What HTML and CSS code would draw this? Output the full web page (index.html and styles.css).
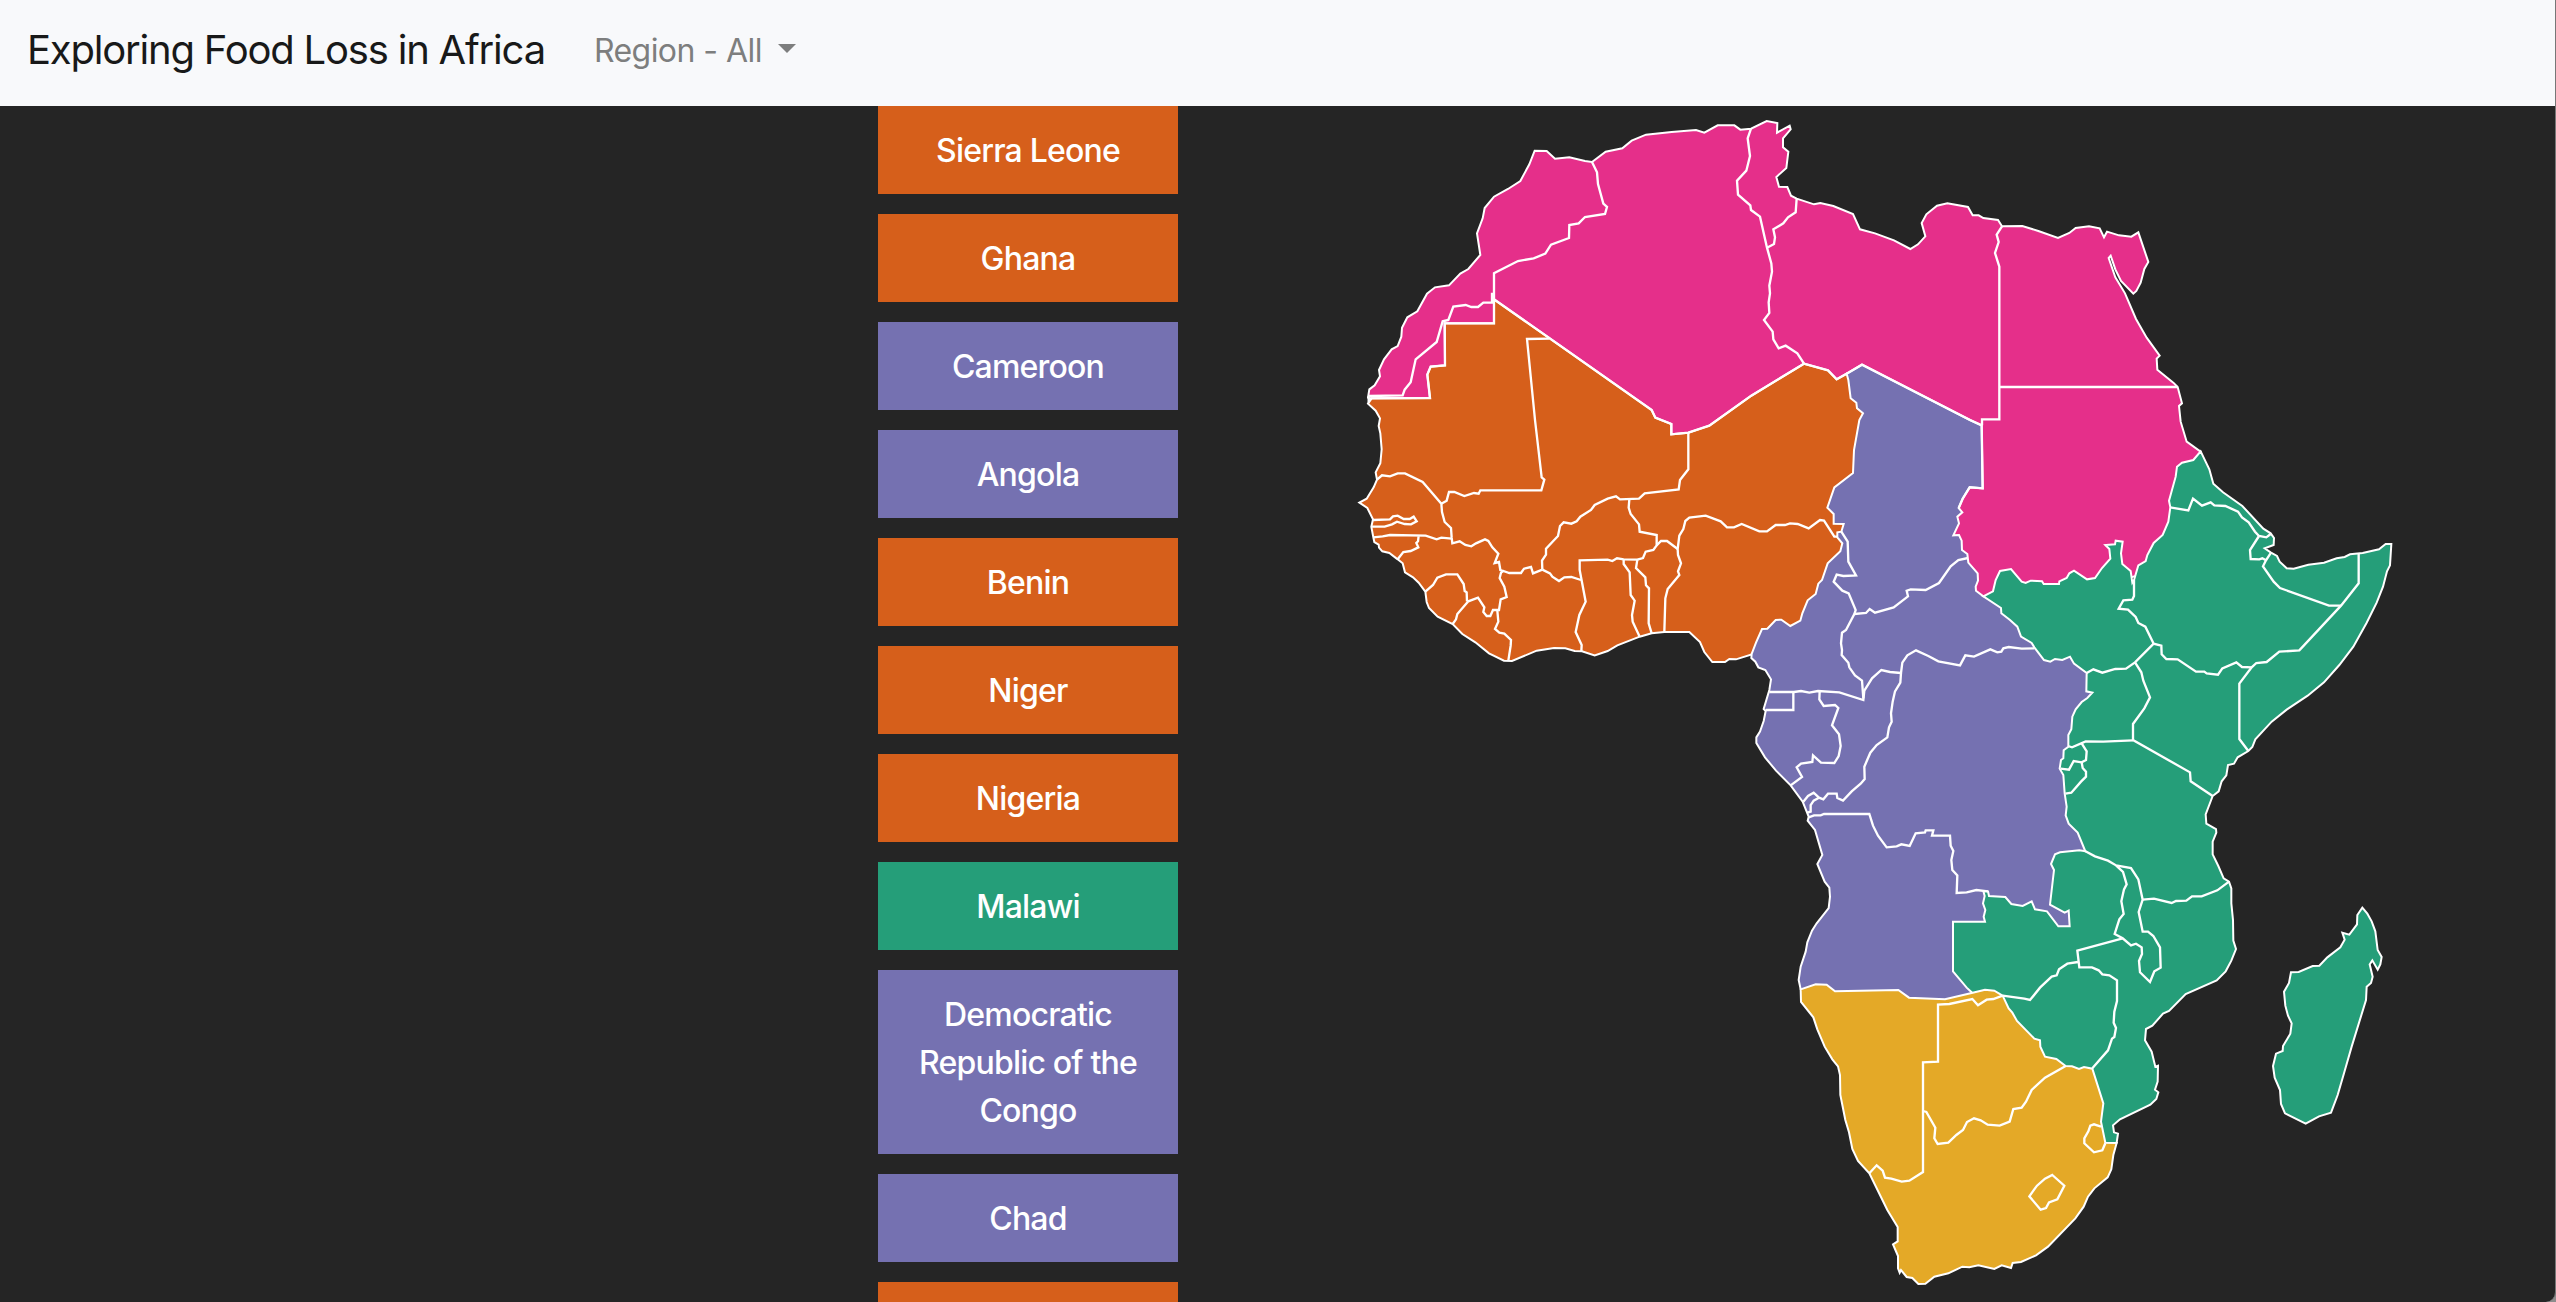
FILE: index.html
```html
<!DOCTYPE html>
<html lang="en">
<head>
<meta charset="utf-8">
<title>Exploring Food Loss in Africa</title>
<link rel="stylesheet" href="styles.css">
</head>
<body>
<nav class="navbar">
  <a class="brand">Exploring Food Loss in Africa</a>
  <a class="dropdown">Region - All<span class="caret"></span></a>
</nav>
<main class="content">
  <div class="countries">
    <div class="card west">Sierra Leone</div>
    <div class="card west">Ghana</div>
    <div class="card central">Cameroon</div>
    <div class="card central">Angola</div>
    <div class="card west">Benin</div>
    <div class="card west">Niger</div>
    <div class="card west">Nigeria</div>
    <div class="card east">Malawi</div>
    <div class="card central">Democratic Republic of the Congo</div>
    <div class="card central">Chad</div>
    <div class="card west"></div>
  </div>
  <svg class="map" viewBox="0 18 3300 3588" role="img" aria-label="Map of Africa by region">
    <!-- Northern Africa -->
    <path class="region north" d="M84,893L88,868 104,856 120,829 117,810 132,778 155,748 173,738 184,710 186,683 202,652 232,634 261,581 285,562 327,556 361,521 385,507 421,465 411,400 428,355 434,324 462,290 504,267 541,243 568,193 584,152 620,153 645,176 688,172 735,183 756,186 797,155 847,145 875,122 918,104 995,96 1068,90 1093,98 1133,76 1183,76 1201,89 1233,86 1280,63 1312,69 1311,98 1349,77 1352,88 1329,115 1329,142 1345,155 1339,204 1309,231 1317,260 1342,261 1353,287 1370,296 1422,313 1441,309 1480,318 1539,342 1560,388 1605,400 1662,421 1711,447 1734,433 1756,409 1745,369 1759,343 1791,317 1822,310 1884,321 1898,346 1916,346 1930,354 1974,360 1986,379 2047,378 2095,393 2154,414 2188,399 2207,384 2247,379 2279,385 2292,412 2301,395 2337,406 2374,410 2395,397 2425,486 2413,507 2402,548 2389,573 2380,581 2343,543 2326,508 2312,467 2306,474 2326,532 2355,580 2388,657 2420,713 2459,767 2450,776 2452,809 2500,848 2513,861 2526,910 2517,918 2522,965 2540,1025 2582,1055 2500,1400 2100,1500 1936,1492 1885,1480 1700,1100 1400,1000 1000,1020 500,900 200,920 110,905Z"/>
    <!-- Western Africa -->
    <path class="region west" d="M84,911L95,895 270,894 262,824 272,800 315,796 314,670 462,670 462,598 625,712 935,930 946,953 994,972 994,1003 1045,998 1108,977 1234,887 1392,791 1464,811 1490,838 1520,821 1620,950 1600,1200 1580,1400 1500,1600 1350,1700 1234,1664 1188,1678 1168,1677 1155,1686 1117,1686 1093,1656 1080,1626 1048,1596 973,1596 935,1600 899,1610 832,1636 803,1653 764,1666 726,1654 704,1653 676,1645 642,1644 590,1652 516,1683 492,1682 447,1660 406,1627 367,1602 338,1572 293,1550 267,1524 260,1506 256,1475 236,1448 219,1432 195,1417 188,1390 173,1378 148,1359 127,1354 117,1343 116,1334 103,1326 100,1312 94,1280 99,1258 82,1224 58,1208 80,1196 101,1162 111,1139 107,1117 121,1090 125,1048 121,1000 116,978 120,955 107,932Z"/>
    <!-- Central Africa -->
    <path class="region central" d="M1520,821L1566,794 1890,960 1925,976 1928,1165 1889,1162 1868,1196 1856,1224 1867,1237 1852,1250 1857,1270 1840,1306 1857,1305 1865,1322 1866,1350 1882,1362 1885,1388 1913,1420 1914,1442 1907,1460 1908,1472 1930,1489 2000,1500 2150,1640 2200,1640 2260,1700 2290,1850 2220,1980 2260,2180 2240,2420 2230,2500 2040,2520 1920,2570 1940,2680 1840,2730 1440,2730 1382,2668 1376,2640 1382,2600 1397,2555 1402,2527 1416,2492 1430,2470 1466,2424 1470,2390 1468,2363 1454,2345 1432,2292 1447,2265 1425,2190 1403,2162 1406,2150 1388,2105 1352,2056 1308,2012 1275,1972 1249,1929 1249,1912 1260,1895 1271,1863 1277,1833 1271,1827 1288,1770 1293,1738 1276,1710 1255,1702 1246,1685 1234,1674 1235,1662 1248,1628 1266,1587 1282,1586 1307,1560 1324,1559 1351,1578 1381,1562 1387,1540 1403,1501 1427,1482 1435,1451 1446,1440 1463,1390 1501,1354 1507,1330 1492,1312 1492,1297 1504,1295 1511,1272 1481,1271 1481,1242 1462,1223 1483,1162 1539,1119 1542,1050 1558,960 1569,940 1551,925 1549,908 1532,895 1525,840Z"/>
    <!-- Eastern Africa -->
    <path class="region east" d="M2582,1054L2608,1108 2620,1151 2649,1177 2707,1218 2770,1286 2792,1300 2802,1314 2801,1335 2774,1345 2793,1358 2811,1368 2819,1385 2840,1405 2861,1406 2905,1394 2952,1388 2990,1375 3014,1371 3030,1363 3068,1359 3117,1348 3137,1332 3154,1332 3150,1396 3141,1414 3129,1460 3110,1508 3080,1568 3040,1640 2998,1695 2952,1747 2903,1787 2840,1829 2795,1865 2746,1918 2737,1941 2725,1953 2693,1972 2682,1991 2664,1995 2659,2026 2645,2044 2636,2074 2618,2088 2597,2143 2599,2171 2628,2187 2629,2198 2618,2225 2618,2263 2635,2298 2651,2335 2667,2345 2674,2365 2674,2410 2679,2460 2680,2522 2688,2547 2674,2582 2657,2614 2630,2641 2537,2682 2487,2733 2469,2741 2437,2777 2418,2787 2415,2821 2435,2855 2446,2900 2454,2897 2453,2945 2445,2969 2455,2977 2449,2997 2431,3014 2340,3058 2319,3076 2322,3097 2334,3101 2330,3128 2200,3150 2200,2980 2060,2900 1970,2780 1920,2705 1894,2676 1880,2663 1839,2614 1839,2465 1935,2465 1931,2450 1936,2430 1929,2410 1934,2388 1930,2373 1944,2374 1947,2388 1996,2391 2014,2412 2048,2418 2075,2404 2085,2428 2121,2434 2155,2479 2189,2479 2186,2432 2174,2438 2130,2414 2142,2310 2133,2292 2145,2263 2160,2257 2218,2251 2236,2254 2213,2198 2186,2171 2177,2146 2180,2120 2174,2080 2170,2025 2159,2006 2163,1980 2170,1975 2171,1951 2185,1940 2185,1905 2194,1888 2197,1850 2207,1828 2225,1806 2242,1794 2257,1778 2239,1774 2240,1719 2202,1691 2190,1670 2167,1680 2145,1677 2131,1685 2112,1680 2083,1642 2075,1629 2043,1610 2032,1580 2010,1560 1984,1540 1983,1524 1930,1489 1959,1474 1967,1440 1980,1413 2013,1407 2045,1445 2057,1449 2072,1442 2106,1444 2111,1452 2157,1452 2158,1444 2180,1434 2188,1420 2202,1412 2241,1438 2265,1434 2286,1404 2311,1376 2308,1347 2296,1335 2325,1333 2327,1322 2348,1325 2343,1360 2347,1392 2372,1413 2377,1448 2382,1440 2395,1396 2417,1383 2422,1365 2441,1329 2468,1305 2485,1265 2491,1222 2487,1202 2507,1130 2511,1100 2526,1088 2560,1080Z"/>
    <!-- Madagascar -->
    <path class="region east" d="M3067,2423L3082,2441 3095,2464 3106,2494 3113,2550 3125,2571 3121,2593 3113,2609 3097,2581 3089,2593 3098,2630 3093,2649 3080,2660 3078,2700 3035,2840 3012,2920 2993,2985 2973,3038 2937,3049 2897,3071 2835,3040 2823,3012 2820,2970 2804,2933 2799,2898 2808,2861 2828,2853 2829,2838 2851,2801 2855,2770 2844,2747 2836,2717 2832,2675 2847,2649 2853,2617 2876,2616 2918,2598 2938,2597 2962,2572 3001,2542 3014,2519 3007,2498 3028,2504 3051,2473 3052,2445Z"/>
    <!-- Southern Africa -->
    <path class="region south" d="M1382,2668L1427,2653 1460,2654 1485,2674 1675,2670 1707,2693 1815,2698 1895,2679 1935,2669 1963,2672 1988,2687 2006,2725 2017,2738 2031,2763 2083,2816 2100,2821 2101,2840 2115,2870 2149,2877 2177,2898 2196,2899 2217,2907 2232,2901 2257,2906 2290,3010 2283,3065 2296,3128 2330,3129 2320,3165 2314,3208 2303,3232 2263,3265 2244,3290 2231,3320 2206,3355 2124,3440 2088,3466 2043,3486 2018,3489 2013,3504 1985,3496 1963,3507 1915,3496 1888,3502 1867,3500 1825,3520 1783,3530 1756,3551 1735,3552 1717,3534 1700,3531 1683,3510 1679,3518 1674,3505 1674,3468 1659,3433 1673,3424 1673,3381 1642,3330 1588,3220 1554,3183 1537,3147 1527,3097 1516,3060 1501,2985 1500,2925 1494,2899 1477,2878 1454,2840 1432,2788 1420,2752 1383,2706Z"/>

    <!-- borders between regions -->
    <g class="border">
      <path d="M84,895L270,894 262,824 272,800 315,796 314,670 462,670 462,598 625,712 935,930 946,953 994,972 994,1003 1045,998 1108,977 1234,887 1392,791 1464,811 1490,838 1520,821 1566,794 1890,960 1925,976 1928,1165 1889,1162 1868,1196 1856,1224"/>
    </g>
    <!-- northern borders -->
    <g class="border">
      <path d="M756,186L771,217 774,252 790,311 801,321 795,342 735,351 716,370 688,375 687,414 633,434 616,461 581,475 534,483 462,520 462,600"/>
      <path d="M456,578V608H430L414,621 394,621 377,615 340,620 325,660 308,664 290,726 227,778 212,847 194,869 188,886 86,888M86,888V908"/>
      <path d="M1233,86L1223,115 1230,168 1219,212 1191,242 1194,284 1231,316 1233,330 1260,350 1281,443 1294,490 1296,515 1288,557 1290,580 1286,607 1288,639 1272,660 1298,695 1300,718 1316,745 1337,737 1372,760 1392,791"/>
      <path d="M1281,443L1302,432 1305,412 1300,388 1330,370 1344,352 1367,337 1370,296"/>
      <path d="M1986,379L1970,404 1976,426 1965,459 1978,500V958H1926V976M1978,861H2512"/>
    </g>
    <!-- western borders -->
    <g class="border">
      <path d="M628,716L561,717 585,960 605,1132 613,1139 604,1171 421,1171 416,1181 402,1179 373,1188 343,1176 327,1176 320,1202 304,1211"/>
      <path d="M111,1139L126,1126 150,1129 173,1120 195,1120 248,1146 304,1211 306,1236 314,1266 333,1284 335,1313 337,1330 359,1324 376,1335 394,1339 408,1330 435,1318 445,1323 457,1342 475,1361 464,1389 477,1386 481,1410 490,1413"/>
      <path d="M99,1260L150,1258 159,1249 173,1247 191,1257 209,1257 221,1250 230,1264 213,1273 194,1272 171,1265 156,1273 134,1280 94,1280"/>
      <path d="M100,1312L128,1309 150,1305 257,1307 290,1318 304,1313 335,1316M236,1307L234,1324 229,1329 235,1342 212,1353 190,1356 173,1378"/>
      <path d="M256,1475L279,1455 292,1433 318,1423 352,1423 371,1452 374,1473 380,1477 381,1504"/>
      <path d="M338,1572L348,1558 352,1542 385,1504 414,1493 433,1522 430,1536 440,1548 451,1548 459,1530 477,1530 482,1498 500,1491 493,1460 479,1434 483,1418 490,1413 508,1419 543,1419 552,1406 573,1401 579,1420 607,1409"/>
      <path d="M472,1532L475,1565 465,1587 478,1598 493,1601 513,1620 512,1637 505,1682"/>
      <path d="M607,1409L606,1382 618,1364 618,1346 654,1308 660,1278 671,1267 694,1271 710,1264 721,1250 753,1230 764,1215 803,1196 828,1189 840,1198 897,1196 914,1180 1016,1168 1020,1140 1045,1108 1045,998"/>
      <path d="M607,1409L630,1420 637,1430 657,1443 673,1432 694,1431 723,1440"/>
      <path d="M724,1654L725,1635 707,1596 718,1545 737,1505 719,1410 719,1381 803,1379 817,1383 831,1375 851,1378 892,1379 909,1374 917,1355 940,1350 950,1336 950,1305 899,1295 897,1273 872,1242 866,1223 868,1198"/>
      <path d="M851,1378L851,1392 869,1417 872,1485 884,1502 876,1545 878,1565 899,1610"/>
      <path d="M892,1379L888,1404 916,1432 918,1456 927,1465 926,1570 935,1600"/>
      <path d="M950,1336L963,1323 981,1323 1013,1347"/>
      <path d="M973,1596L976,1495 983,1467 1018,1425 1014,1414 1023,1390 1014,1365 1013,1347 1018,1307 1030,1287 1036,1263 1048,1253 1097,1247 1142,1264 1161,1282 1182,1282 1205,1272 1258,1294 1281,1294 1307,1275 1335,1275 1350,1270 1373,1272 1406,1285 1440,1260 1452,1262 1483,1310 1492,1310"/>
    </g>
    <!-- central borders -->
    <g class="border">
      <path d="M1504,1295L1523,1325 1525,1385 1548,1426 1510,1428 1490,1424 1481,1445 1507,1472 1526,1480 1547,1530 1543,1542 1518,1590 1506,1598 1503,1630 1506,1650 1505,1665 1525,1688 1528,1702 1545,1726 1566,1742 1570,1795"/>
      <path d="M1543,1542L1578,1539 1589,1527 1605,1538 1661,1522 1704,1489 1700,1472 1712,1468 1757,1470 1797,1449 1832,1399 1855,1380 1884,1374"/>
      <path d="M1288,1776L1362,1776 1383,1773 1408,1778 1434,1773 1498,1777 1570,1800 1573,1772 1596,1735 1624,1710 1650,1716 1683,1719"/>
      <path d="M1360,1776V1830H1277"/>
      <path d="M1439,1773L1438,1798 1451,1818 1485,1815 1495,1824 1476,1876 1497,1903 1502,1938 1496,1968 1483,1989 1443,1988 1419,1966 1417,1986 1383,1991 1370,2002 1386,2031 1352,2056"/>
      <path d="M1683,1719L1681,1748 1665,1774 1658,1805 1653,1840 1655,1865 1647,1882 1642,1912 1610,1935 1591,1958 1573,2000 1574,2037 1562,2051 1535,2074 1509,2102 1492,2094 1490,2081 1464,2081 1450,2098 1437,2093 1421,2078 1404,2088 1390,2105"/>
      <path d="M1437,2093L1421,2102 1412,2115 1412,2135 1402,2138"/>
      <path d="M1406,2152L1422,2146 1442,2146 1452,2142 1588,2142 1599,2177 1614,2207 1640,2242 1670,2239 1684,2233 1709,2238 1727,2200 1755,2197 1757,2191 1780,2191 1776,2207 1830,2207 1832,2237 1840,2253 1834,2280 1837,2310 1852,2326 1850,2379 1880,2377 1909,2370 1944,2374"/>
      <path d="M1683,1719L1687,1688 1702,1666 1728,1651 1765,1668 1795,1684 1860,1696 1876,1666 1902,1670 1951,1648 1972,1657 1984,1655 1990,1645 2006,1641 2045,1646 2083,1645"/>
    </g>
    <!-- eastern borders -->
    <g class="border">
      <path d="M2490,1222L2545,1231 2559,1196 2586,1217 2612,1207 2623,1216 2656,1218 2694,1235 2706,1252 2726,1267 2745,1295 2757,1308 2779,1312 2792,1302"/>
      <path d="M2757,1308L2730,1350 2732,1377 2758,1378 2767,1375 2778,1381"/>
      <path d="M2793,1358L2778,1381 2769,1399 2801,1445 2820,1464 2967,1517 3003,1517"/>
      <path d="M3056,1359V1450L3003,1517 2878,1651 2818,1655 2780,1686 2749,1689 2735,1702 2698,1751 2698,1917 2725,1953"/>
      <path d="M2735,1702L2706,1701 2689,1687 2647,1705 2634,1724 2600,1720 2593,1715 2568,1715 2513,1678 2479,1677 2465,1663 2464,1637 2441,1631 2416,1580 2395,1569 2387,1551 2364,1529 2336,1526 2350,1501 2377,1499 2382,1488 2382,1440"/>
      <path d="M2441,1631L2385,1687 2358,1706 2326,1707 2287,1718 2260,1708 2240,1719"/>
      <path d="M2385,1687L2404,1717 2410,1742 2430,1792 2413,1825 2379,1872 2379,1920 2550,2017 2552,2044 2618,2088"/>
      <path d="M2379,1921L2290,1925 2237,1924 2196,1942 2184,1938"/>
      <path d="M2225,1930L2240,1954 2238,1980 2225,1987 2201,1983 2187,2009 2162,2006"/>
      <path d="M2225,1987L2228,2004 2238,2015 2238,2030 2223,2045 2194,2078 2176,2081"/>
      <path d="M2235,2253L2265,2269 2304,2282 2328,2296 2349,2316 2360,2353 2352,2368 2344,2404 2351,2442 2338,2458 2324,2502 2348,2515 2373,2536 2388,2531 2405,2542 2406,2562 2397,2583 2400,2617 2430,2646 2443,2614 2462,2603 2460,2542 2440,2508 2424,2495 2408,2495 2396,2436 2408,2399 2395,2338 2373,2304 2328,2296"/>
      <path d="M2408,2399L2442,2396 2495,2409 2508,2403 2539,2402 2556,2389 2585,2389 2632,2371 2667,2345"/>
      <path d="M2348,2515L2212,2552 2218,2602 2256,2602 2276,2611 2287,2623 2308,2626 2331,2641 2331,2703 2323,2735 2321,2768 2328,2784 2323,2811 2316,2816 2304,2851 2257,2905"/>
      <path d="M2214,2586L2182,2591 2157,2608 2150,2626 2135,2630 2100,2663 2070,2700 2053,2696 1988,2687"/>
    </g>
    <!-- southern borders -->
    <g class="border">
      <path d="M1988,2687L1960,2697 1940,2699 1914,2716 1897,2697 1828,2712 1794,2714V2885L1749,2887V3216L1708,3242 1685,3245 1654,3236 1635,3233 1628,3212 1610,3196 1588,3220"/>
      <path d="M1749,3033L1759,3036 1786,3083 1783,3115 1793,3132 1825,3128 1849,3105 1869,3090 1881,3066 1902,3055 1922,3061 1943,3074 1979,3077 2009,3065 2020,3027 2045,3023 2058,3005 2075,2970 2115,2933 2177,2898"/>
      <path d="M2137,3225L2173,3257 2152,3298 2127,3307 2118,3324 2102,3329 2068,3289 2091,3257 2115,3236Z"/>
      <path d="M2283,3080L2262,3073 2251,3077 2245,3094 2233,3115 2233,3130 2262,3157 2287,3151 2296,3130"/>
    </g>
  </svg>
</main>
</body>
</html>
```
FILE: styles.css
```css
* { box-sizing: border-box; }

html { background: #8c8c8c; }

body {
  margin: 0;
  height: 1302px;
  overflow: hidden;
  display: flex;
  flex-direction: column;
  background: #252525;
  border-right: 1px solid #777;
  border-bottom-right-radius: 10px;
  font-family: Inter, "Liberation Sans", sans-serif;
  font-size: 32px;
  line-height: 48px;
}

.navbar {
  flex: none;
  display: flex;
  align-items: center;
  gap: 49px;
  height: 106px;
  padding: 0 28px 5px 27px;
  background: #f8f9fb;
}

.brand {
  margin-bottom: 2px;
  font-size: 40px;
  line-height: 60px;
  color: #181919;
  letter-spacing: -1.2px;
}

.dropdown {
  display: flex;
  align-items: center;
  color: #7d7e7e;
  letter-spacing: -0.55px;
}

.caret {
  margin-left: 16px;
  margin-bottom: 4px;
  border: 9.6px solid transparent;
  border-top-color: currentColor;
  border-bottom: 0;
}

.content {
  flex: 1;
  min-height: 0;
  display: grid;
  grid-template-columns: 300px 1100px;
  column-gap: 162px;
  padding-left: 878px;
  overflow: hidden;
}

.countries {
  display: flex;
  flex-direction: column;
  gap: 20px;
}

.card {
  flex: none;
  min-height: 88px;
  padding: 21px 20px 19px;
  color: #fff;
  font-weight: 500;
  letter-spacing: -0.8px;
  text-align: center;
}

.card.west { background: #d65f1b; }
.card.central { background: #7571b1; }
.card.east { background: #259e79; }

.map {
  display: block;
  width: 1100px;
  height: 1196px;
}

.region {
  stroke: #fff;
  stroke-width: 6;
}

.region.north { fill: #e52f8a; }
.region.west { fill: #d65f1b; }
.region.central { fill: #7571b1; }
.region.east { fill: #259e79; }
.region.south { fill: #e4a927; }

.border {
  fill: none;
  stroke: #fff;
  stroke-width: 7;
}
```
